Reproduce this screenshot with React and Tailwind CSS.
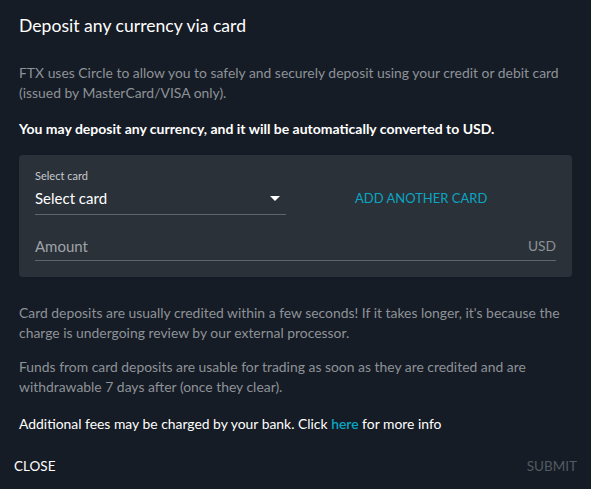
import React from 'react';

const App = () => {
    return (
        <div className="w-[591px] h-[489px] bg-[#161c25] text-white flex flex-col" style={{ fontFamily: 'Lato, "Noto Sans", sans-serif' }}>
            <h2 className="px-[19px] pt-[14px] text-[17.6px] leading-[24px] text-white">Deposit any currency via card</h2>

            <div className="px-[19px] pt-[25px]">
                <p className="text-[13.9px] leading-[20px] text-[#8d9298]">
                    FTX uses Circle to allow you to safely and securely deposit using your credit or debit card (issued by MasterCard/VISA only).
                </p>
                <p className="mt-[16px] text-[14px] leading-[20px] font-bold text-white">
                    You may deposit any currency, and it will be automatically converted to USD.
                </p>

                <div className="mt-[16px] bg-[#2b3139] rounded-[4px] px-[16px] pt-[14px] pb-[16px]">
                    <div className="flex items-end">
                        <div className="w-[251px]">
                            <div className="text-[11px] leading-[14px] text-[#c7cacd]">Select card</div>
                            <div className="flex items-center justify-between h-[32px] border-b border-[#5f656c]">
                                <span className="text-[15px] text-white">Select card</span>
                                <svg width="10" height="5" viewBox="0 0 10 5" className="mr-[6px]">
                                    <path d="M0 0h10L5 5z" fill="#ffffff" />
                                </svg>
                            </div>
                        </div>
                        <div className="ml-[69px] h-[32px] flex items-center">
                            <button className="text-[13px] text-[#0aa5c2] uppercase">Add another card</button>
                        </div>
                    </div>
                    <div className="mt-[18px] flex items-center justify-between h-[28px] border-b border-[#5f656c]">
                        <span className="text-[15px] text-[#9ea3a8]">Amount</span>
                        <span className="text-[13.8px] text-[#8d9298]">USD</span>
                    </div>
                </div>

                <p className="mt-[26px] text-[13.9px] leading-[20px] text-[#8d9298]">
                    Card deposits are usually credited within a few seconds! If it takes longer, it's because the charge is undergoing review by our external processor.
                </p>
                <p className="mt-[14px] text-[13.9px] leading-[20px] text-[#8d9298]">
                    Funds from card deposits are usable for trading as soon as they are credited and are withdrawable 7 days after (once they clear).
                </p>
                <p className="mt-[17px] text-[13.9px] leading-[20px] text-white">
                    Additional fees may be charged by your bank. Click <span className="text-[#0aa5c2] font-semibold">here</span> for more info
                </p>
            </div>

            <div className="mt-auto flex justify-between px-[14px] pb-[13px]">
                <button className="text-[13.5px] text-white uppercase">Close</button>
                <button className="text-[13.5px] text-[#535a62] uppercase">Submit</button>
            </div>
        </div>
    );
};

export default App;
